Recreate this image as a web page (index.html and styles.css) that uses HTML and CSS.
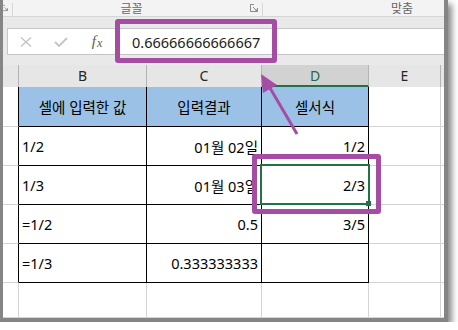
FILE: index.html
```html
<!DOCTYPE html>
<html>
<head>
<meta charset="utf-8">
<link rel="stylesheet" href="styles.css">
</head>
<body>

<div class="frame">

  <!-- 리본 그룹 이름 줄 -->
  <div class="ribbon">
    <div class="grp grp-prev">
      <svg class="launcher" width="8" height="8" viewBox="0 0 8 8"><path d="M0.5 4V0.5H4M0.5 0.5V7.5H7.5V4M3 3L7 7M7 5V7H5" fill="none" stroke="#8a8a8a" stroke-width="1"/></svg>
    </div>
    <div class="grp grp-font">
      <span class="grp-label">글꼴</span>
      <svg class="launcher" width="8" height="8" viewBox="0 0 8 8"><path d="M0.5 4V0.5H4M0.5 0.5V7.5H7.5V4M3 3L7 7M7 5V7H5" fill="none" stroke="#8a8a8a" stroke-width="1"/></svg>
    </div>
    <div class="grp grp-align">
      <span class="grp-label">맞춤</span>
    </div>
  </div>

  <!-- 수식 입력줄 -->
  <div class="fbar">
    <div class="fbox">
      <span class="fbtn">
        <svg width="12" height="10" viewBox="0 0 12 10"><path d="M1 0.5L11 9.5M11 0.5L1 9.5" stroke="#c4c4c4" stroke-width="1.4"/></svg>
      </span>
      <span class="fbtn">
        <svg width="14" height="10" viewBox="0 0 14 10"><path d="M1 5L5 9L13 1" fill="none" stroke="#c4c4c4" stroke-width="1.8"/></svg>
      </span>
      <span class="fbtn fx"><i>f</i><i class="fx-x">x</i></span>
      <span class="ftext">0.66666666666667</span>
    </div>
  </div>

  <!-- 시트 -->
  <div class="sheet">
    <div class="ch"></div>
    <div class="ch">B</div>
    <div class="ch">C</div>
    <div class="ch ch-sel">D</div>
    <div class="ch">E</div>
    <div class="ch ch-last"></div>

    <div class="c c-a"></div>
    <div class="c t th">셀에 입력한 값</div>
    <div class="c t th">입력결과</div>
    <div class="c t th">셀서식</div>
    <div class="c"></div>
    <div class="c c-last"></div>

    <div class="c c-a"></div>
    <div class="c t">1/2</div>
    <div class="c t r">01월 02일</div>
    <div class="c t r">1/2</div>
    <div class="c"></div>
    <div class="c c-last"></div>

    <div class="c c-a"></div>
    <div class="c t">1/3</div>
    <div class="c t r">01월 03일</div>
    <div class="c t r">2/3</div>
    <div class="c"></div>
    <div class="c c-last"></div>

    <div class="c c-a"></div>
    <div class="c t">=1/2</div>
    <div class="c t r">0.5</div>
    <div class="c t r">3/5</div>
    <div class="c"></div>
    <div class="c c-last"></div>

    <div class="c c-a"></div>
    <div class="c t">=1/3</div>
    <div class="c t r">0.333333333</div>
    <div class="c t r"></div>
    <div class="c"></div>
    <div class="c c-last"></div>

    <div class="c"></div>
    <div class="c"></div>
    <div class="c"></div>
    <div class="c"></div>
    <div class="c"></div>
    <div class="c c-last"></div>
  </div>

  <!-- 선택된 셀 -->
  <div class="sel"></div>
  <div class="sel-handle"></div>

  <!-- 보라색 표시 -->
  <div class="mark mark-fx"></div>
  <div class="mark mark-cell"></div>
  <svg class="arrow" width="441" height="318" viewBox="0 0 441 318">
    <line x1="294" y1="134" x2="267" y2="88" stroke="#a54ca5" stroke-width="3"/>
    <polygon points="258,74 274,85 260,93" fill="#a54ca5"/>
  </svg>

</div>

</body>
</html>
```

FILE: styles.css
```css
/* 엑셀 화면 캡처 재현 */

body {
  margin: 0;
  background: #fff;
  font-family: "Noto Sans", "Noto Sans CJK KR", sans-serif;
}

/* 캡처 테두리와 그림자 */
.frame {
  position: relative;
  width: 441px;
  height: 318px;
  overflow: hidden;
  border-left: 3px solid #858585;
  border-right: 4px solid #858585;
  border-bottom: 4px solid #858585;
  box-shadow: 4px 4px 6px rgba(0, 0, 0, 0.45);
  background: #fff;
}

/* 리본 */
.ribbon {
  display: flex;
  height: 16px;
  background: #f3f3f3;
  border-bottom: 1px solid #d6d6d6;
}
.grp {
  position: relative;
  display: flex;
  align-items: center;
  flex-shrink: 0;
  height: 16px;
}
/* 그룹 구분선 */
.grp::after {
  content: "";
  position: absolute;
  right: 0;
  top: 3px;
  bottom: 0;
  border-right: 1px solid #d6d6d6;
}
.grp-prev {
  width: 10px;
}
.grp-font {
  width: 250px;
}
.grp-align {
  width: 278px;
}
.grp-align::after {
  display: none;
}
.grp-label {
  flex: 1;
  text-align: center;
  font-family: "Noto Sans CJK KR", sans-serif;
  font-size: 12px;
  line-height: 14px;
  color: #666;
}
.launcher {
  display: block;
  margin-right: 5px;
}
.grp-prev .launcher {
  margin-left: -1px;
}

/* 수식 입력줄 */
.fbar {
  height: 48px;
  background: #e9e9e9;
  padding: 11px 0 0 4px;
  box-sizing: border-box;
}
.fbox {
  display: flex;
  align-items: center;
  height: 27px;
  box-sizing: border-box;
  background: #fff;
  border: 1px solid #c6c6c6;
  border-right: none;
}
.fbtn {
  display: flex;
  justify-content: center;
  align-items: center;
  width: 36px;
  flex-shrink: 0;
}
.fbtn:nth-child(2) {
  width: 34px;
}
.fx {
  width: 38px;
  font-family: "Liberation Serif", serif;
  font-size: 15px;
  color: #5a5a5a;
}
.fx-x {
  font-size: 12px;
  margin-left: 1px;
  margin-top: 3px;
}
.ftext {
  padding-left: 16px;
  font-size: 14.5px;
  color: #222;
  white-space: nowrap;
}

/* 시트 격자 */
.sheet {
  display: grid;
  grid-template-columns: 16px 128px 115px 107px 72px 3px;
  grid-template-rows: 22px 40px 39px 39px 39px 39px 35px;
  font-size: 14.5px;
  color: #000;
}
.ch {
  display: flex;
  justify-content: center;
  align-items: center;
  padding-bottom: 2px;
  box-sizing: border-box;
  background: #e6e6e6;
  border-right: 1px solid #b4b4b4;
  font-size: 14px;
  color: #262626;
}
.ch-sel {
  background: #d2d2d2;
  border-bottom: 2px solid #217346;
  padding-bottom: 0;
  color: #1e6b41;
}
.ch-last,
.c-last {
  border-right: none;
}
.c {
  display: flex;
  align-items: center;
  box-sizing: border-box;
  padding: 0 3px;
  border-right: 1px solid #d4d4d4;
  border-bottom: 1px solid #d4d4d4;
  white-space: nowrap;
  overflow: hidden;
}
.c-a {
  border-right-color: #000;
}
.t {
  border-right-color: #000;
  border-bottom-color: #000;
}
.th {
  justify-content: center;
  background: #9bc2e6;
  font-size: 14.5px;
}
.r {
  justify-content: flex-end;
}

/* 선택 영역 (셀 위에 겹침) */
.sel {
  position: absolute;
  left: 257px;
  top: 164px;
  width: 110px;
  height: 41px;
  box-sizing: border-box;
  border: 2px solid #217346;
}
.sel-handle {
  position: absolute;
  left: 363px;
  top: 201px;
  width: 5px;
  height: 5px;
  background: #217346;
}

/* 보라색 강조 표시 */
.mark {
  position: absolute;
  box-sizing: border-box;
  border: 5px solid #a54ca5;
  border-radius: 3px;
}
.mark-fx {
  left: 112px;
  top: 19px;
  width: 162px;
  height: 44px;
}
.mark-cell {
  left: 249px;
  top: 154px;
  width: 129px;
  height: 60px;
}
.arrow {
  position: absolute;
  left: 0;
  top: 0;
}
```
